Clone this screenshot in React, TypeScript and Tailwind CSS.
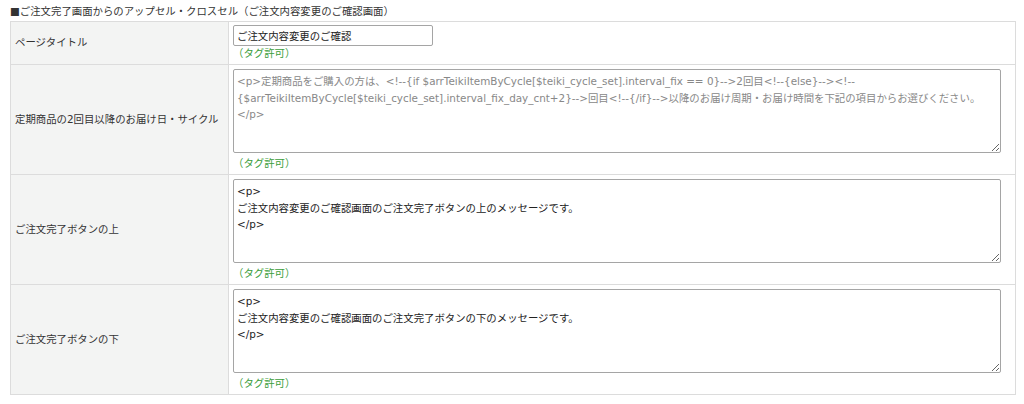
import React from 'react';

const font = { fontFamily: '"DejaVu Sans", "Noto Sans CJK JP", sans-serif' };

const TagNote: React.FC<{ className?: string }> = ({ className = '' }) => (
  <div className={`text-[#3a9d3a] leading-[14px] ${className}`}>（タグ許可）</div>
);

const rows = [
  {
    label: '定期商品の2回目以降のお届け日・サイクル',
    value:
      '<p>定期商品をご購入の方は、<!--{if $arrTeikiItemByCycle[$teiki_cycle_set].interval_fix == 0}-->2回目<!--{else}--><!--{$arrTeikiItemByCycle[$teiki_cycle_set].interval_fix_day_cnt+2}-->回目<!--{/if}-->以降のお届け周期・お届け時間を下記の項目からお選びください。\n</p>',
    muted: true,
  },
  {
    label: 'ご注文完了ボタンの上',
    value: '<p>\nご注文内容変更のご確認画面のご注文完了ボタンの上のメッセージです。\n</p>',
    muted: false,
  },
  {
    label: 'ご注文完了ボタンの下',
    value: '<p>\nご注文内容変更のご確認画面のご注文完了ボタンの下のメッセージです。\n</p>',
    muted: false,
  },
];

export default function App() {
  return (
    <div className="w-[1024px] h-[404px] bg-white text-[10.4px] text-[#333]" style={font}>
      <div className="pl-[10px] pt-[1px] leading-[20px] h-[21px]">
        ■ご注文完了画面からのアップセル・クロスセル（ご注文内容変更のご確認画面）
      </div>
      <table className="ml-[10px] w-[1006px] border-collapse border border-[#dcdcdc]">
        <tbody>
          <tr className="h-[43px]">
            <th className="w-[218px] border border-[#dcdcdc] bg-[#f3f4f3] px-[4px] text-left font-normal align-middle">
              ページタイトル
            </th>
            <td className="border border-[#dcdcdc] px-[4px] py-[3px] align-top">
              <input
                type="text"
                defaultValue="ご注文内容変更のご確認"
                className="block w-[200px] h-[21px] border border-[#a5a5a5] rounded-[2px] px-[3px] text-[10.4px] text-[#222] outline-none"
                style={font}
              />
              <TagNote />
            </td>
          </tr>
          {rows.map((r) => (
            <tr key={r.label} className="h-[110px]">
              <th className="border border-[#dcdcdc] bg-[#f3f4f3] px-[4px] text-left font-normal align-middle">
                {r.label}
              </th>
              <td className="border border-[#dcdcdc] px-[4px] pt-[4px] pb-[4px] align-top">
                <textarea
                  defaultValue={r.value}
                  className={`block w-[768px] h-[84px] border border-[#a5a5a5] rounded-[2px] px-[3px] py-[3px] text-[10.4px] leading-[16.5px] outline-none ${
                    r.muted ? 'text-[#888]' : 'text-[#222]'
                  }`}
                  style={font}
                />
                <TagNote className="mt-[3px]" />
              </td>
            </tr>
          ))}
        </tbody>
      </table>
    </div>
  );
}
